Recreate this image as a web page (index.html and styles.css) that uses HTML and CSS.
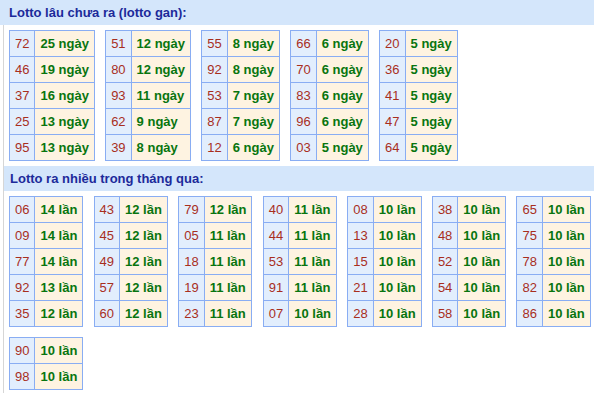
FILE: index.html
```html
<!DOCTYPE html>
<html lang="vi">
<head>
<meta charset="utf-8">
<title>Thống kê lotto</title>
<link rel="stylesheet" href="styles.css">
</head>
<body>
<h2 class="box-title box-title--top">Lotto lâu chưa ra (lotto gan):</h2>
<div class="box">
  <div class="grid">
    <table class="stat"><tr><td class="num">72</td><td class="val">25 ngày</td></tr><tr><td class="num">46</td><td class="val">19 ngày</td></tr><tr><td class="num">37</td><td class="val">16 ngày</td></tr><tr><td class="num">25</td><td class="val">13 ngày</td></tr><tr><td class="num">95</td><td class="val">13 ngày</td></tr></table>
    <table class="stat"><tr><td class="num">51</td><td class="val">12 ngày</td></tr><tr><td class="num">80</td><td class="val">12 ngày</td></tr><tr><td class="num">93</td><td class="val">11 ngày</td></tr><tr><td class="num">62</td><td class="val">9 ngày</td></tr><tr><td class="num">39</td><td class="val">8 ngày</td></tr></table>
    <table class="stat"><tr><td class="num">55</td><td class="val">8 ngày</td></tr><tr><td class="num">92</td><td class="val">8 ngày</td></tr><tr><td class="num">53</td><td class="val">7 ngày</td></tr><tr><td class="num">87</td><td class="val">7 ngày</td></tr><tr><td class="num">12</td><td class="val">6 ngày</td></tr></table>
    <table class="stat"><tr><td class="num">66</td><td class="val">6 ngày</td></tr><tr><td class="num">70</td><td class="val">6 ngày</td></tr><tr><td class="num">83</td><td class="val">6 ngày</td></tr><tr><td class="num">96</td><td class="val">6 ngày</td></tr><tr><td class="num">03</td><td class="val">5 ngày</td></tr></table>
    <table class="stat"><tr><td class="num">20</td><td class="val">5 ngày</td></tr><tr><td class="num">36</td><td class="val">5 ngày</td></tr><tr><td class="num">41</td><td class="val">5 ngày</td></tr><tr><td class="num">47</td><td class="val">5 ngày</td></tr><tr><td class="num">64</td><td class="val">5 ngày</td></tr></table>
  </div>

  <h2 class="box-title">Lotto ra nhiều trong tháng qua:</h2>
  <div class="grid">
    <table class="stat"><tr><td class="num">06</td><td class="val">14 lần</td></tr><tr><td class="num">09</td><td class="val">14 lần</td></tr><tr><td class="num">77</td><td class="val">14 lần</td></tr><tr><td class="num">92</td><td class="val">13 lần</td></tr><tr><td class="num">35</td><td class="val">12 lần</td></tr></table>
    <table class="stat"><tr><td class="num">43</td><td class="val">12 lần</td></tr><tr><td class="num">45</td><td class="val">12 lần</td></tr><tr><td class="num">49</td><td class="val">12 lần</td></tr><tr><td class="num">57</td><td class="val">12 lần</td></tr><tr><td class="num">60</td><td class="val">12 lần</td></tr></table>
    <table class="stat"><tr><td class="num">79</td><td class="val">12 lần</td></tr><tr><td class="num">05</td><td class="val">11 lần</td></tr><tr><td class="num">18</td><td class="val">11 lần</td></tr><tr><td class="num">19</td><td class="val">11 lần</td></tr><tr><td class="num">23</td><td class="val">11 lần</td></tr></table>
    <table class="stat"><tr><td class="num">40</td><td class="val">11 lần</td></tr><tr><td class="num">44</td><td class="val">11 lần</td></tr><tr><td class="num">53</td><td class="val">11 lần</td></tr><tr><td class="num">91</td><td class="val">11 lần</td></tr><tr><td class="num">07</td><td class="val">10 lần</td></tr></table>
    <table class="stat"><tr><td class="num">08</td><td class="val">10 lần</td></tr><tr><td class="num">13</td><td class="val">10 lần</td></tr><tr><td class="num">15</td><td class="val">10 lần</td></tr><tr><td class="num">21</td><td class="val">10 lần</td></tr><tr><td class="num">28</td><td class="val">10 lần</td></tr></table>
    <table class="stat"><tr><td class="num">38</td><td class="val">10 lần</td></tr><tr><td class="num">48</td><td class="val">10 lần</td></tr><tr><td class="num">52</td><td class="val">10 lần</td></tr><tr><td class="num">54</td><td class="val">10 lần</td></tr><tr><td class="num">58</td><td class="val">10 lần</td></tr></table>
    <table class="stat"><tr><td class="num">65</td><td class="val">10 lần</td></tr><tr><td class="num">75</td><td class="val">10 lần</td></tr><tr><td class="num">78</td><td class="val">10 lần</td></tr><tr><td class="num">82</td><td class="val">10 lần</td></tr><tr><td class="num">86</td><td class="val">10 lần</td></tr></table>
    <table class="stat"><tr><td class="num">90</td><td class="val">10 lần</td></tr><tr><td class="num">98</td><td class="val">10 lần</td></tr></table>
  </div>
</div>
</body>
</html>
```

FILE: styles.css
```css
html, body {
  margin: 0;
  padding: 0;
  background: #ffffff;
  font-family: "Liberation Sans", Arial, sans-serif;
  font-size: 13px;
}

/* section headings */
.box-title {
  margin: 0;
  height: 25px;
  line-height: 25px;
  padding: 0 0 0 6px;
  background: #d4e6fb;
  color: #1c2a9a;
  font-size: 13px;
  font-weight: bold;
}

.box-title--top {
  padding-left: 9px;
}

/* content box with the thin grey rule on its left */
.box {
  margin-left: 3px;
  border-left: 1px solid #d6d6d6;
  min-height: 368px;
}

.grid {
  display: flex;
  flex-wrap: wrap;
  align-items: flex-start;
  gap: 10px 10.25px;
  padding: 5px 0 5px 5px;
}

/* number / count tables */
.stat {
  border-collapse: collapse;
  border: 1px solid #89adf3;
}

.stat td {
  border: 1px solid #89adf3;
  height: 25px;
  padding: 0 5px;
  white-space: nowrap;
  line-height: 25px;
}

.stat .num {
  background: #e2eefd;
  color: #a82e1e;
  text-align: center;
}

.stat .val {
  background: #fef3e1;
  color: #08750f;
  font-weight: bold;
  text-align: left;
}
```
